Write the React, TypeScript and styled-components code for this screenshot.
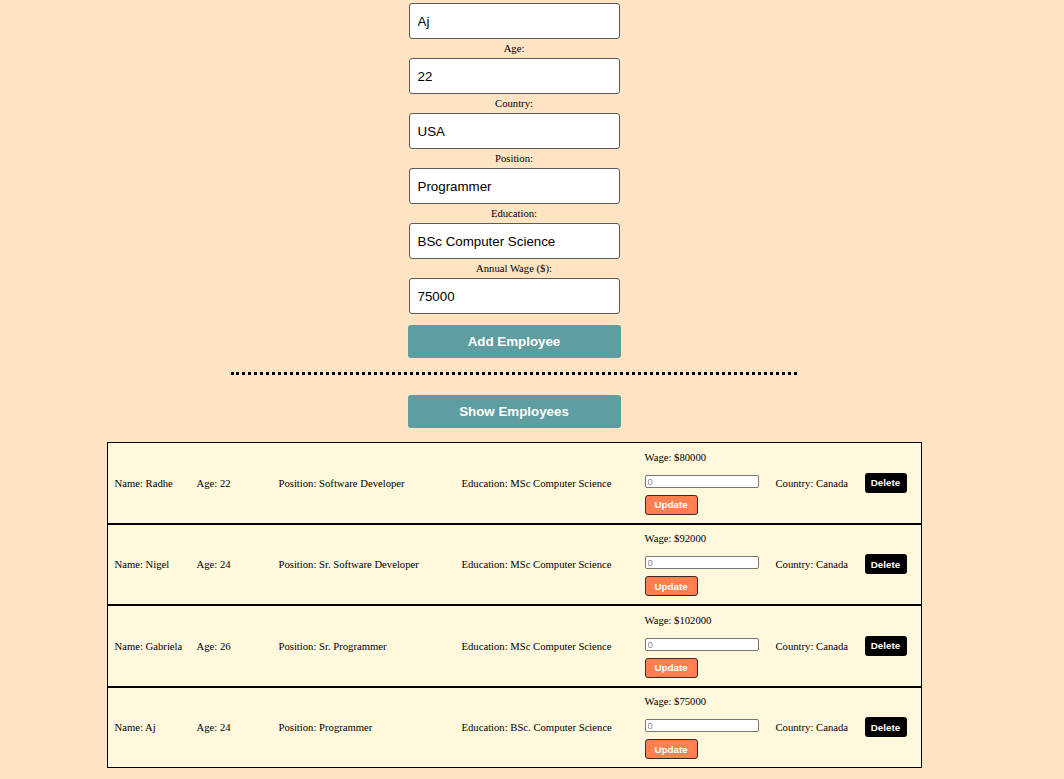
import React from "react";
import styled, { createGlobalStyle } from "styled-components";

const GlobalStyle = createGlobalStyle`
  html, body {
    margin: 0;
    padding: 0;
    background: #ffe4c4;
    font-family: "Liberation Serif", "Times New Roman", serif;
    color: #000;
  }
`;

const Page = styled.div`
  width: 1028px;
  display: flex;
  flex-direction: column;
  align-items: center;
  padding-top: 3px;
`;

const Form = styled.div`
  display: flex;
  flex-direction: column;
  align-items: center;
`;

const Label = styled.label`
  display: block;
  font-size: 10.67px;
  line-height: 19px;
  text-align: center;
`;

const TextInput = styled.input`
  box-sizing: border-box;
  width: 211px;
  height: 36px;
  margin: 0;
  padding: 0 8px;
  font-family: "Liberation Sans", Arial, sans-serif;
  font-size: 13.33px;
  color: #000;
  background: #fff;
  border: 1px solid #5a5a5a;
  border-radius: 3px;
  outline: none;
`;

const MainButton = styled.button<{ $top?: number }>`
  box-sizing: border-box;
  margin-top: ${(p) => p.$top ?? 0}px;
  width: 213px;
  height: 33px;
  background: #5f9ea0;
  color: #fff;
  font-family: "Liberation Sans", Arial, sans-serif;
  font-weight: bold;
  font-size: 13.33px;
  border: none;
  border-radius: 3px;
  cursor: pointer;
`;

const Divider = styled.hr`
  width: 566px;
  margin: 14px 0 20px;
  border: none;
  border-top: 3px dotted #000;
  height: 0;
`;

const List = styled.div`
  margin-top: 14px;
  width: 815px;
  display: flex;
  flex-direction: column;
`;

const Row = styled.div`
  box-sizing: border-box;
  height: 81.5px;
  display: grid;
  grid-template-columns: 82px 82px 183px 183px 131px 89px auto;
  align-items: center;
  padding-left: 7px;
  background: #fff8dc;
  border: 1px solid #000;
  font-size: 10.67px;
`;

const Cell = styled.div`
  white-space: nowrap;
`;

const WageCol = styled.div`
  display: flex;
  flex-direction: column;
  align-items: flex-start;
`;

const WageText = styled.div`
  line-height: 13px;
  margin-bottom: 11px;
`;

const WageInput = styled.input`
  box-sizing: border-box;
  width: 114px;
  height: 13px;
  padding: 0 2px;
  margin: 0 0 7px;
  font-family: "Liberation Sans", Arial, sans-serif;
  font-size: 9.6px;
  border: 1px solid #767676;
  border-radius: 2px;
  background: #fff;
  &::placeholder {
    color: #8a8a8a;
  }
`;

const SmallButton = styled.button<{ $bg: string; $w: number; $border: string }>`
  box-sizing: border-box;
  width: ${(p) => p.$w}px;
  height: 20px;
  padding: 0;
  background: ${(p) => p.$bg};
  color: #fff;
  font-family: "Liberation Sans", Arial, sans-serif;
  font-weight: bold;
  font-size: 9.8px;
  border: ${(p) => p.$border};
  border-radius: 3px;
  cursor: pointer;
`;

const employees = [
  { name: "Radhe", age: 22, position: "Software Developer", education: "MSc Computer Science", wage: 80000, country: "Canada" },
  { name: "Nigel", age: 24, position: "Sr. Software Developer", education: "MSc Computer Science", wage: 92000, country: "Canada" },
  { name: "Gabriela", age: 26, position: "Sr. Programmer", education: "MSc Computer Science", wage: 102000, country: "Canada" },
  { name: "Aj", age: 24, position: "Programmer", education: "BSc. Computer Science", wage: 75000, country: "Canada" },
];

const fields = [
  { label: "Age:", value: "22" },
  { label: "Country:", value: "USA" },
  { label: "Position:", value: "Programmer" },
  { label: "Education:", value: "BSc Computer Science" },
  { label: "Annual Wage ($):", value: "75000" },
];

export default function App() {
  return (
    <>
      <GlobalStyle />
      <Page>
        <Form>
          <TextInput defaultValue="Aj" />
          {fields.map((f) => (
            <React.Fragment key={f.label}>
              <Label>{f.label}</Label>
              <TextInput defaultValue={f.value} />
            </React.Fragment>
          ))}
          <MainButton $top={11}>Add Employee</MainButton>
        </Form>
        <Divider />
        <MainButton>Show Employees</MainButton>
        <List>
          {employees.map((e) => (
            <Row key={e.name}>
              <Cell>Name: {e.name}</Cell>
              <Cell>Age: {e.age}</Cell>
              <Cell>Position: {e.position}</Cell>
              <Cell>Education: {e.education}</Cell>
              <WageCol>
                <WageText>Wage: ${e.wage}</WageText>
                <WageInput placeholder="0" />
                <SmallButton $bg="#ff7f50" $w={53} $border="1px solid #3a2a20">
                  Update
                </SmallButton>
              </WageCol>
              <Cell>Country: {e.country}</Cell>
              <SmallButton $bg="#000" $w={42} $border="none">
                Delete
              </SmallButton>
            </Row>
          ))}
        </List>
      </Page>
    </>
  );
}
